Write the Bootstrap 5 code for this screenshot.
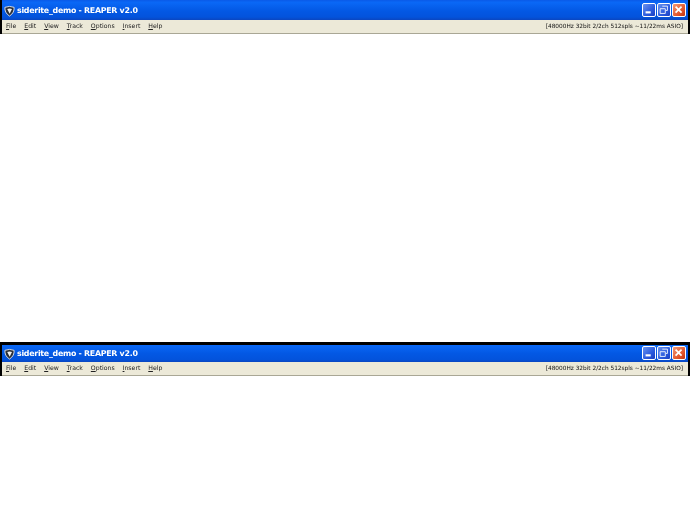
<!DOCTYPE html>
<html lang="en"><head><meta charset="utf-8"><title>REAPER</title>
<link href="https://cdn.jsdelivr.net/npm/bootstrap@5.3.0/dist/css/bootstrap.min.css" rel="stylesheet">
<style>
html,body{background:#fff;height:518px;overflow:hidden}
.xpwin{background:#000;padding:0 2px;font-family:"DejaVu Sans",sans-serif}
.xpwin.lower{margin-top:308px;padding-top:3px}
.xptitle{height:20px;padding:1px 0 0 2px;background:linear-gradient(#0a5ae8 0,#0a68f6 12%,#0358e4 55%,#0353dc 85%,#0a46c0 100%);color:#fff;font-size:7.9px;font-weight:700;white-space:nowrap}
.lower .xptitle{height:17px;padding-top:0;background:linear-gradient(#0a68f6 0,#0358e4 50%,#0353dc 85%,#0a46c0 100%)}
.xplogo{margin-right:2px;flex:none}
.xpname{filter:blur(.25px);letter-spacing:-.28px}
.xpmenu{height:13px;background:#ece9d8;font-size:6.2px;color:#222;padding:0 5px 1px 4px;gap:7.9px}
.xprule{height:1px;background:#a9a795}
.xpmenu>span{filter:blur(.25px)}
.xpbtn{width:14px;height:14px;border:1px solid #fff;border-radius:2px;background:linear-gradient(135deg,#6b94ee,#2a5ade 60%,#1b3fc0);display:block}
.xpbtn.shut{background:linear-gradient(135deg,#f09a78,#e2542a 65%,#c03410)}
.xpctl{gap:1px;padding-right:2px;margin-top:-2px}
.xpstat{font-size:5.8px;white-space:nowrap;color:#111}
</style></head><body class="m-0">
<div class="xpwin">
 <div class="xptitle d-flex align-items-center">
  <svg class="xplogo" width="11" height="12" viewBox="0 0 12 12"><path d="M1 2Q6 0 11 2Q11.500 8 6 11.500Q.5 8 1 2Z" fill="#2a2e36" stroke="#e4e6ea"/><path d="M3.500 3.700Q6 2.700 8.700 3.700L6.200 9Z" fill="#f2f2f2"/></svg>
  <span class="xpname">siderite_demo - REAPER v2.0</span>
  <span class="xpctl ms-auto d-flex align-items-center">
   <svg class="xpbtn" viewBox="0 0 14 14"><rect x="3" y="8.500" width="6" height="2.500" fill="#fff"/></svg>
   <svg class="xpbtn" viewBox="0 0 14 14"><path d="M5 2.500h6v5h-2M2.500 5.500h6v5.500h-6z" fill="none" stroke="#fff"/></svg>
   <svg class="xpbtn shut" viewBox="0 0 14 14"><path d="M3 3l7 7M10 3l-7 7" stroke="#fff" stroke-width="2"/></svg>
  </span>
 </div>
 <div class="xpmenu d-flex align-items-center">
  <span><u>F</u>ile</span><span><u>E</u>dit</span><span><u>V</u>iew</span><span><u>T</u>rack</span><span><u>O</u>ptions</span><span><u>I</u>nsert</span><span><u>H</u>elp</span>
  <span class="xpstat ms-auto">[48000Hz 32bit 2/2ch 512spls ~11/22ms ASIO]</span>
 </div>
 <div class="xprule"></div>
</div>
<div class="xpwin lower">
 <div class="xptitle d-flex align-items-center">
  <svg class="xplogo" width="11" height="12" viewBox="0 0 12 12"><path d="M1 2Q6 0 11 2Q11.500 8 6 11.500Q.5 8 1 2Z" fill="#2a2e36" stroke="#e4e6ea"/><path d="M3.500 3.700Q6 2.700 8.700 3.700L6.200 9Z" fill="#f2f2f2"/></svg>
  <span class="xpname">siderite_demo - REAPER v2.0</span>
  <span class="xpctl ms-auto d-flex align-items-center">
   <svg class="xpbtn" viewBox="0 0 14 14"><rect x="3" y="8.500" width="6" height="2.500" fill="#fff"/></svg>
   <svg class="xpbtn" viewBox="0 0 14 14"><path d="M5 2.500h6v5h-2M2.500 5.500h6v5.500h-6z" fill="none" stroke="#fff"/></svg>
   <svg class="xpbtn shut" viewBox="0 0 14 14"><path d="M3 3l7 7M10 3l-7 7" stroke="#fff" stroke-width="2"/></svg>
  </span>
 </div>
 <div class="xpmenu d-flex align-items-center">
  <span><u>F</u>ile</span><span><u>E</u>dit</span><span><u>V</u>iew</span><span><u>T</u>rack</span><span><u>O</u>ptions</span><span><u>I</u>nsert</span><span><u>H</u>elp</span>
  <span class="xpstat ms-auto">[48000Hz 32bit 2/2ch 512spls ~11/22ms ASIO]</span>
 </div>
 <div class="xprule"></div>
</div>
</body></html>
